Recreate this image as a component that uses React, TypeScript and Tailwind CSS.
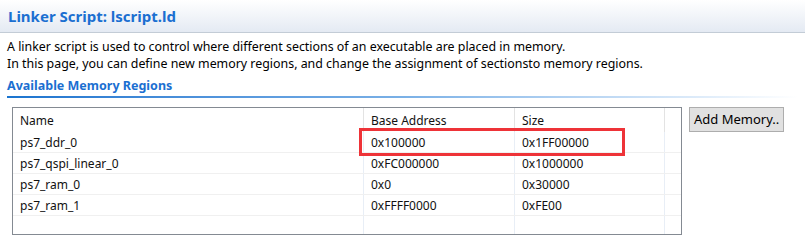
const rows = [
  { name: 'ps7_ddr_0', base: '0x100000', size: '0x1FF00000' },
  { name: 'ps7_qspi_linear_0', base: '0xFC000000', size: '0x1000000' },
  { name: 'ps7_ram_0', base: '0x0', size: '0x30000' },
  { name: 'ps7_ram_1', base: '0xFFFF0000', size: '0xFE00' },
];

export default function App() {
  return (
    <div className="w-[805px] h-[245px] bg-white text-black font-['Noto_Sans','Noto_Sans_CJK_SC',sans-serif] overflow-hidden">
      {/* 타이틀 바 */}
      <div className="h-[33px] pl-2 flex items-center bg-gradient-to-b from-white to-[#e4eaf3] border-b border-[#c3ccd6]">
        <span className="text-[15px] font-bold text-[#1b6fd1] leading-none">Linker Script: lscript.ld</span>
      </div>

      <div className="px-[7px] pt-[5px] text-[12.4px] leading-[17px]">
        <p>A linker script is used to control where different sections of an executable are placed in memory.</p>
        <p>In this page, you can define new memory regions, and change the assignment of sectionsto memory regions.</p>
      </div>

      <div className="mx-[7px] mt-[6px] text-[12.5px] font-bold text-[#1b6fd1] leading-[16px]">Available Memory Regions</div>
      <div className="mx-[7px] mt-[2px] h-[2px] bg-gradient-to-r from-[#1a74cf] via-[#7ab0e6] to-white" />

      <div className="flex items-start mt-[9px] ml-[12px]">
        <div className="relative w-[670px] border border-[#848a92] text-[12px] text-[#111]">
          <div className="grid grid-cols-[350px_151px_150px_1fr] h-[24px] items-center">
            <div className="pl-[7px] pt-[2px]">Name</div>
            <div className="pl-[7px] pt-[2px] h-full flex items-center border-l border-[#e3e3e3]">Base Address</div>
            <div className="pl-[7px] pt-[2px] h-full flex items-center border-l border-[#e3e3e3]">Size</div>
            <div className="h-full border-l border-[#e3e3e3]" />
          </div>
          {rows.map((r) => (
            <div key={r.name} className="grid grid-cols-[350px_151px_150px_1fr] h-[21px] items-center border-b border-[#f0f0f0]">
              <div className="pl-[7px] pt-[2px]">{r.name}</div>
              <div className="pl-[7px] pt-[2px] h-full flex items-center border-l border-[#e8eef6]">{r.base}</div>
              <div className="pl-[7px] pt-[2px] h-full flex items-center border-l border-[#e8eef6]">{r.size}</div>
              <div className="h-full border-l border-[#e8eef6]" />
            </div>
          ))}
          <div className="grid grid-cols-[350px_151px_150px_1fr] h-[18px]">
            <div />
            <div className="border-l border-[#e8eef6]" />
            <div className="border-l border-[#e8eef6]" />
            <div className="border-l border-[#e8eef6]" />
          </div>

          {/* 빨간 강조 박스 */}
          <div className="absolute left-[346px] top-[20px] w-[266px] h-[28px] border-[3px] border-[#ee3338]" />
        </div>

        <button className="ml-[7px] h-[25px] px-[4px] bg-[#e1e1e1] border border-[#adadad] text-[13px] text-black leading-none">
          Add Memory..
        </button>
      </div>
    </div>
  );
}
